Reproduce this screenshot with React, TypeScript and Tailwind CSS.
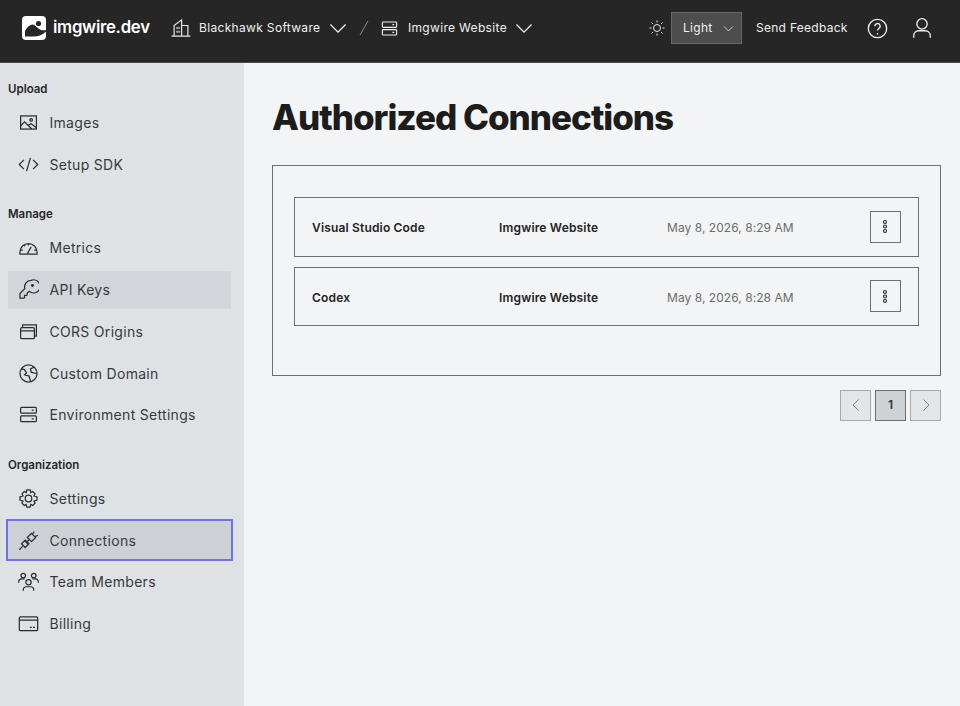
import React from "react";

type IP = { className?: string };
const S = ({ children, className }: { children: React.ReactNode; className?: string }) => (
  <svg viewBox="0 0 32 32" fill="none" stroke="currentColor" strokeWidth={1.9} className={className}>{children}</svg>
);
const ImageIcon = (p: IP) => (
  <S {...p}><rect x="4" y="6" width="24" height="20" /><circle cx="20" cy="12" r="2" /><path d="M4 21l6-6 11 11M16 20l4-2 8 6" /></S>
);
const CodeIcon = (p: IP) => (
  <S {...p}><path d="M9 9l-7 7 7 7M23 9l7 7-7 7M19 6l-6 20" /></S>
);
const MeterIcon = (p: IP) => (
  <S {...p}><path d="M3 26v-3a13 13 0 0 1 26 0v3zM14 26l6-11M16 10v3M3.500 20h4M9 12l2 2M24.500 20h4" /></S>
);
const KeyIcon = (p: IP) => (
  <S {...p}><path d="M20 2a10 10 0 0 0-9.600 12.600L3 22v7h6l1-1v-3h3l1-1v-2.500l3-2.700A10 10 0 1 0 20 2z" /><circle cx="22" cy="10" r="1.300" fill="currentColor" /></S>
);
const CopyIcon = (p: IP) => (
  <S {...p}><rect x="4" y="10" width="21" height="17" rx="2" /><path d="M4 15h21M7 10V6h21v17h-3" /></S>
);
const GlobeIcon = (p: IP) => (
  <S {...p}><circle cx="16" cy="16" r="13" /><path d="M5 9l5 1 3 5-3 3 7 2 2 8M25 6l-6 3 1 5 4 1 5 1" /></S>
);
const ServerIcon = (p: IP) => (
  <S {...p}><rect x="4" y="5" width="24" height="9" rx="1.500" /><rect x="4" y="18" width="24" height="9" rx="1.500" /><path d="M21 9.500h3M21 22.500h3" /></S>
);
const GearIcon = (p: IP) => (
  <S {...p}><circle cx="16" cy="16" r="5" /><path d="M13.500 3h5l1 4 3-1.700 3.500 3.500L24.300 12l4.700 1.500v5L24.300 20l1.700 3.200-3.500 3.500-3-1.700-1 4h-5l-1-4-3 1.700L6 23.200 7.700 20 3 18.500v-5L7.700 12 6 8.800l3.500-3.500 3 1.700z" /></S>
);
const PlugIcon = (p: IP) => (
  <S {...p}>
    <rect x="7" y="17" width="8" height="8" transform="rotate(45 11 21)" />
    <rect x="16" y="7" width="9" height="9" transform="rotate(45 20.500 11.500)" />
    <path d="M7 25l-5 5M14 18l3-3M22 6l3-3.500M26 10l4.500-2M10 16l6 6" />
  </S>
);
const TeamIcon = (p: IP) => (
  <S {...p}><circle cx="16" cy="17" r="4" /><path d="M8 30v-1a5 5 0 0 1 5-5h6a5 5 0 0 1 5 5v1" /><circle cx="8" cy="7" r="3.500" /><circle cx="24" cy="7" r="3.500" /><path d="M1 18v-1a5 5 0 0 1 5-5h4M31 18v-1a5 5 0 0 0-5-5h-4" /></S>
);
const BillingIcon = (p: IP) => (
  <S {...p}><rect x="2" y="6" width="28" height="21" rx="2" /><path d="M2 11h28M18 22h3M23 22h3" /></S>
);
const BuildingIcon = (p: IP) => (
  <S {...p}><path d="M1 29h30M5 29V12L17 3v26M17 12h10v17" /><path d="M9 15h2v2H9zM9 21h2v2H9zM12.500 15h1.500v2h-1.500zM12.500 21h1.500v2h-1.500z" strokeWidth={1} /></S>
);
const Chevron = (p: IP) => (
  <S {...p}><path d="M5 11l11 11 11-11" /></S>
);
const Sun = (p: IP) => (
  <S {...p}><circle cx="16" cy="16" r="7" /><path d="M16 1v4M16 27v4M1 16h4M27 16h4M5 5l3 3M24 24l3 3M5 27l3-3M24 8l3-3" /></S>
);
const HelpIcon = (p: IP) => (
  <svg viewBox="0 0 32 32" fill="none" stroke="currentColor" strokeWidth={2} className={p.className}>
    <circle cx="16" cy="16" r="14" />
    <path d="M12 12.500a4 4 0 1 1 6 3.400c-1.300.8-2 1.600-2 3.100" />
    <circle cx="16" cy="24" r="1.300" fill="currentColor" stroke="none" />
  </svg>
);
const UserIcon = (p: IP) => (
  <S {...p}><circle cx="16" cy="10" r="7.500" /><path d="M4 30v-3a7 7 0 0 1 7-7h10a7 7 0 0 1 7 7v3" /></S>
);
const Dots = (p: IP) => (
  <svg viewBox="0 0 8 18" fill="none" stroke="currentColor" strokeWidth={1.5} className={p.className}>
    <circle cx="4" cy="3" r="2" /><circle cx="4" cy="9" r="2" /><circle cx="4" cy="15" r="2" />
  </svg>
);
const Logo = () => (
  <svg viewBox="0 0 24 24" className="w-[24px] h-[24px] shrink-0">
    <rect width="24" height="24" rx="4" fill="#fff" />
    <circle cx="16.500" cy="7.500" r="2.600" fill="#262626" />
    <path fill="#262626" d="M3 20.500V15C5 11 8 8.500 10.500 8.500 13 8.500 15 12 18 13.500c2 1 4 1 6 .5v1.500C21 19 16 20.500 12 20.500z" />
  </svg>
);

const Section = ({ title, children }: { title: string; children: React.ReactNode }) => (
  <div className="flex flex-col">
    <div className="h-5 mb-[4px] pl-2 flex items-center text-[11.5px] font-semibold text-[#262626]">{title}</div>
    <div className="flex flex-col gap-[3.75px]">{children}</div>
  </div>
);
const Item = ({ icon: I, label, hover, focus }: { icon: (p: IP) => React.ReactElement; label: string; hover?: boolean; focus?: boolean }) => (
  <div className={"h-[38px] mx-2 w-[223px] flex items-center pl-[10px] gap-[10.5px] text-[#363a3d] text-[14px] tracking-[0.3px] " + (hover ? "bg-[#d2d5d9] " : "") + (focus ? "bg-[#cdd0d5] outline-2 outline-[#6f71e4] " : "")}>
    <I className="w-[21px] h-[21px] shrink-0 text-[#2a2d30]" />
    <span>{label}</span>
  </div>
);
const Row = ({ a, date }: { a: string; date: string }) => (
  <div className="h-[59.5px] border border-[#6f6f6f] flex items-center pl-[17px] pr-[17.500px]">
    <div className="w-[187px] pt-[3px] text-[12px] font-semibold text-[#232323] tracking-[0.17px]">{a}</div>
    <div className="w-[168px] pt-[3px] text-[12px] font-semibold text-[#232323] tracking-[0.17px]">Imgwire Website</div>
    <div className="flex-1 pt-[3px] text-[12px] text-[#6c6c6c] tracking-[0.05px]">{date}</div>
    <div className="w-[31px] h-[32px] border border-[#6f6f6f] flex items-center justify-center text-[#262626]">
      <Dots className="w-[6px] h-[15px]" />
    </div>
  </div>
);

export default function App() {
  return (
    <div className="w-[960px] h-[706px] overflow-hidden flex flex-col bg-[#f2f4f6] font-['Inter','Liberation_Sans',sans-serif]">
      <header className="h-[63px] shrink-0 bg-[#262626] border-b border-[#4a4a4a] pb-[6px] flex items-center text-[#f0f0f0]">
        <div className="pl-[22px] flex items-center gap-[7px] w-[171px]">
          <Logo />
          <span className="text-[16.8px] font-semibold text-white tracking-[-0.3px]">imgwire.dev</span>
        </div>
        <BuildingIcon className="w-[20px] h-[20px] text-[#e8e8e8] shrink-0" />
        <span className="ml-[8px] text-[12px] tracking-[0.33px]">Blackhawk Software</span>
        <Chevron className="ml-[6.500px] w-[22px] h-[22px]" />
        <svg viewBox="0 0 10 16" className="ml-[10px] w-[10px] h-[16px] text-[#8f8f8f]" fill="none" stroke="currentColor"><path d="M1 15L9 1" /></svg>
        <ServerIcon className="ml-[11px] w-[19px] h-[19px] shrink-0" />
        <span className="ml-[9px] text-[12px] tracking-[0.33px]">Imgwire Website</span>
        <Chevron className="ml-[5.600px] w-[22px] h-[22px]" />
        <Sun className="ml-[114.400px] w-[16px] h-[16px]" />
        <div className="ml-[6px] w-[71px] h-[32px] bg-[#4d4d4d] border border-[#666] flex items-center pl-[11px] text-[12px] tracking-[0.3px]">
          Light
          <Chevron className="ml-[9px] w-[13px] h-[13px]" />
        </div>
        <span className="ml-[14px] text-[12px] tracking-[0.28px]">Send Feedback</span>
        <HelpIcon className="ml-[19px] w-[21px] h-[21px]" />
        <UserIcon className="ml-[23px] w-[22px] h-[22px]" />
      </header>
      <div className="flex-1 flex min-h-0">
        <aside className="w-[244px] shrink-0 bg-[#dfe2e5] pt-[16.500px] flex flex-col gap-[21.500px]">
          <Section title="Upload">
            <Item icon={ImageIcon} label="Images" />
            <Item icon={CodeIcon} label="Setup SDK" />
          </Section>
          <Section title="Manage">
            <Item icon={MeterIcon} label="Metrics" />
            <Item icon={KeyIcon} label="API Keys" hover />
            <Item icon={CopyIcon} label="CORS Origins" />
            <Item icon={GlobeIcon} label="Custom Domain" />
            <Item icon={ServerIcon} label="Environment Settings" />
          </Section>
          <Section title="Organization">
            <Item icon={GearIcon} label="Settings" />
            <Item icon={PlugIcon} label="Connections" focus />
            <Item icon={TeamIcon} label="Team Members" />
            <Item icon={BillingIcon} label="Billing" />
          </Section>
        </aside>
        <main className="flex-1 pl-[28px] pr-[19px]">
          <h1 className="mt-[30px] h-[48px] flex items-center text-[35px] font-extrabold text-[#1c1c1c] tracking-[-1px]">Authorized Connections</h1>
          <section className="mt-[24px] h-[211px] border border-[#6f6f6f] px-[21px] pt-[31px] flex flex-col gap-[10px]">
            <Row a="Visual Studio Code" date="May 8, 2026, 8:29 AM" />
            <Row a="Codex" date="May 8, 2026, 8:28 AM" />
          </section>
          <nav className="mt-[13.500px] flex justify-end gap-[4px]">
            <div className="w-[31px] h-[31px] bg-[#e3e5e9] border border-[#a8a8a8] flex items-center justify-center text-[#7a7a7a]">
              <Chevron className="w-[16px] h-[16px] rotate-90" />
            </div>
            <div className="w-[31px] h-[31px] bg-[#ced1d6] border border-[#6f6f6f] flex items-center justify-center text-[12px] font-semibold text-[#333]">1</div>
            <div className="w-[31px] h-[31px] bg-[#e3e5e9] border border-[#a8a8a8] flex items-center justify-center text-[#7a7a7a]">
              <Chevron className="w-[16px] h-[16px] -rotate-90" />
            </div>
          </nav>
        </main>
      </div>
    </div>
  );
}
